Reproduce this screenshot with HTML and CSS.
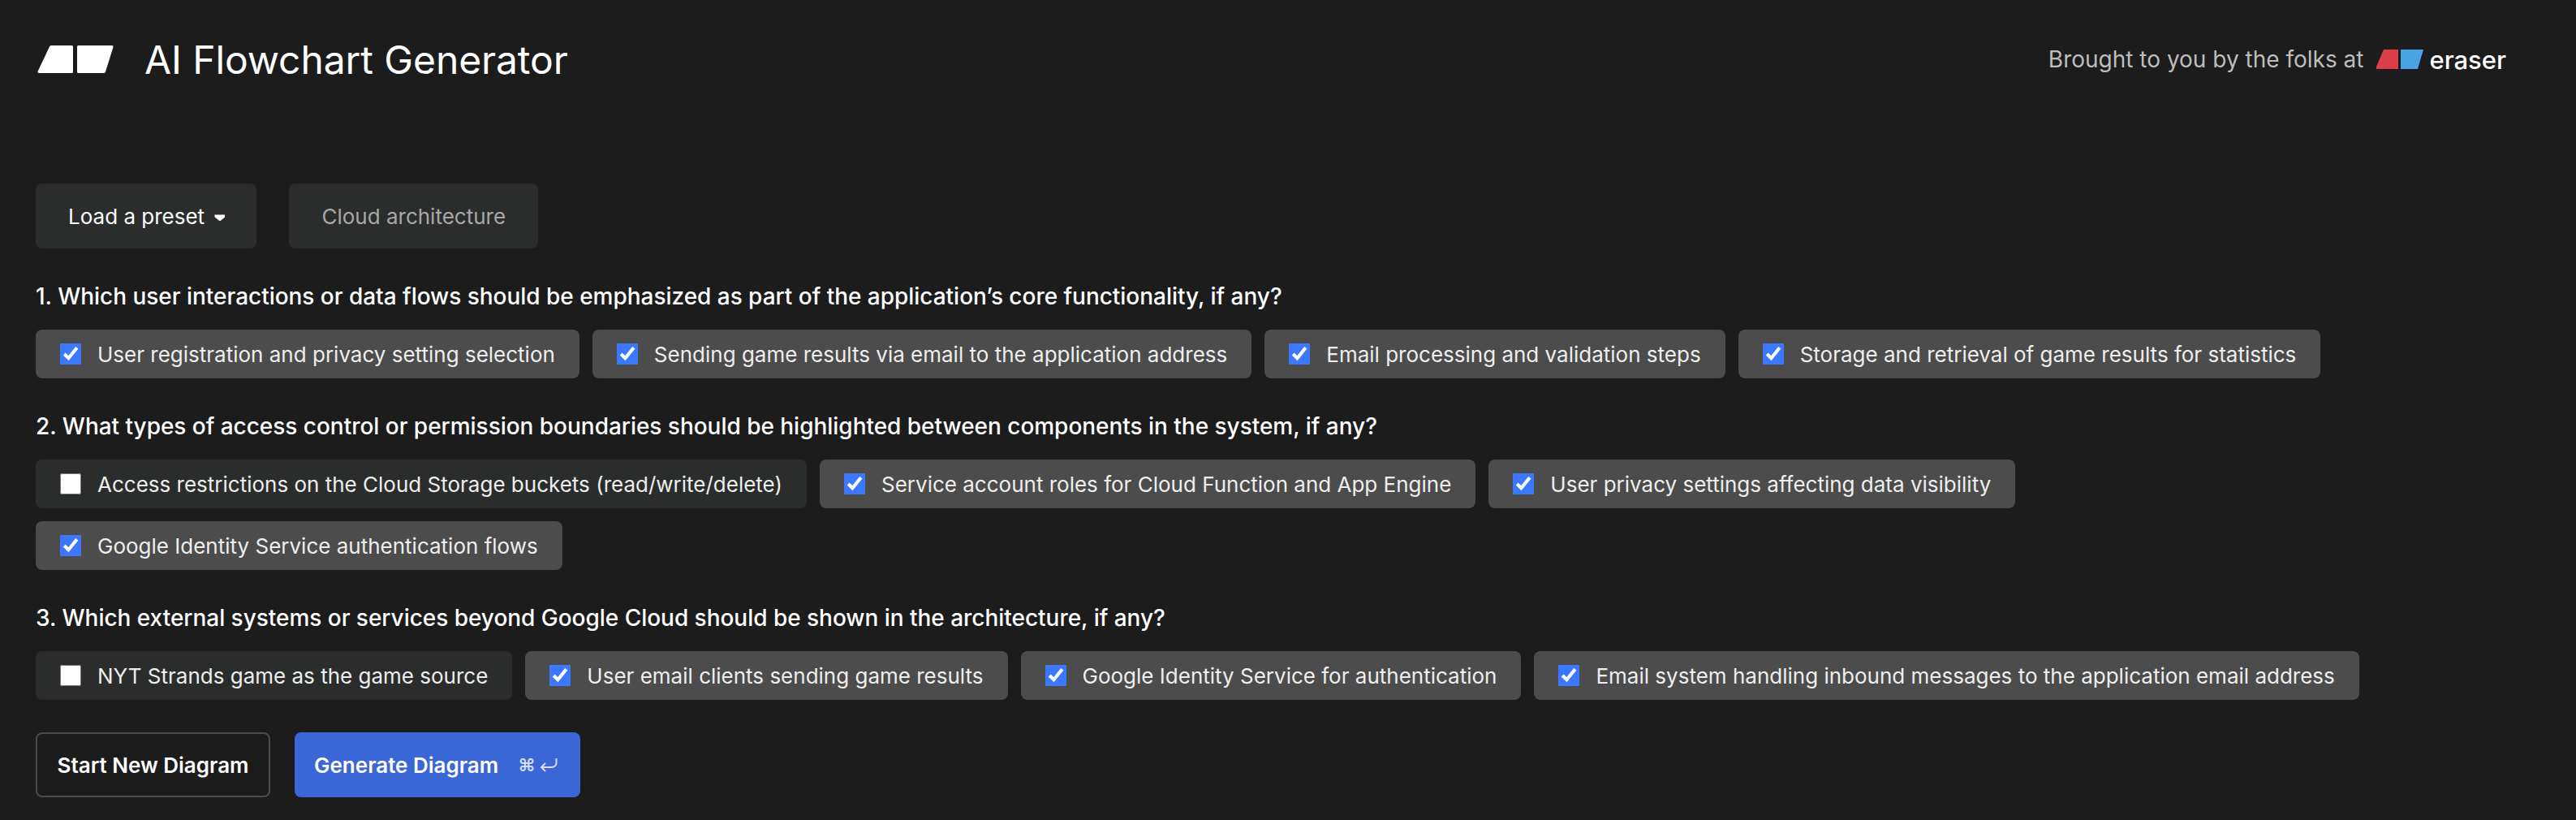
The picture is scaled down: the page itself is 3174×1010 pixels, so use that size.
FILE: index.html
```html
<!DOCTYPE html>
<html lang="en">
<head>
    <meta charset="UTF-8">
    <meta name="viewport" content="width=device-width, initial-scale=1.0">
    <title>AI Flowchart Generator</title>
    <link rel="stylesheet" href="styles.css">
</head>
<body>

<header class="topbar">
    <div class="brand">
        <svg class="brand-logo" viewBox="0 0 94 34" width="94" height="34">
            <path d="M15 1.500Q15.500 0 17 0H42.500Q44 0 44 1.500V32.500Q44 34 42.500 34H2Q0 34 .5 32Z" fill="#fff"/>
            <path d="M49 1.500Q49 0 50.500 0H92Q94 0 93.500 2L84 32.500Q83.500 34 82 34H50.500Q49 34 49 32.500Z" fill="#fff"/>
        </svg>
        <h1 class="brand-title">AI Flowchart Generator</h1>
    </div>
    <div class="credit">
        <span>Brought to you by the folks at</span>
        <svg class="credit-logo" viewBox="0 0 58 24" width="58" height="24">
            <path d="M9 0H27V24H0V21Z" fill="#dc3f4a"/>
            <path d="M30 0H58L51 24H30Z" fill="#4aa3e2"/>
        </svg>
        <span class="credit-name">eraser</span>
    </div>
</header>

<main>
    <div class="presets">
        <button class="preset-btn preset-load">Load a preset <span class="caret"></span></button>
        <button class="preset-btn preset-current">Cloud architecture</button>
    </div>

    <section class="question">
        <h2>1. Which user interactions or data flows should be emphasized as part of the application’s core functionality, if any?</h2>
        <div class="options">
            <label class="option on"><input type="checkbox" checked>User registration and privacy setting selection</label>
            <label class="option on"><input type="checkbox" checked>Sending game results via email to the application address</label>
            <label class="option on"><input type="checkbox" checked>Email processing and validation steps</label>
            <label class="option on"><input type="checkbox" checked>Storage and retrieval of game results for statistics</label>
        </div>
    </section>

    <section class="question">
        <h2>2. What types of access control or permission boundaries should be highlighted between components in the system, if any?</h2>
        <div class="options">
            <label class="option"><input type="checkbox">Access restrictions on the Cloud Storage buckets (read/write/delete)</label>
            <label class="option on"><input type="checkbox" checked>Service account roles for Cloud Function and App Engine</label>
            <label class="option on"><input type="checkbox" checked>User privacy settings affecting data visibility</label>
            <label class="option on"><input type="checkbox" checked>Google Identity Service authentication flows</label>
        </div>
    </section>

    <section class="question">
        <h2>3. Which external systems or services beyond Google Cloud should be shown in the architecture, if any?</h2>
        <div class="options">
            <label class="option"><input type="checkbox">NYT Strands game as the game source</label>
            <label class="option on"><input type="checkbox" checked>User email clients sending game results</label>
            <label class="option on"><input type="checkbox" checked>Google Identity Service for authentication</label>
            <label class="option on"><input type="checkbox" checked>Email system handling inbound messages to the application email address</label>
        </div>
    </section>

    <div class="actions">
        <button class="btn-outline">Start New Diagram</button>
        <button class="btn-primary">Generate Diagram
            <span class="shortcut">⌘
                <svg viewBox="0 0 22 18" width="22" height="18" fill="none" stroke="#d5def5" stroke-width="2">
                    <path d="M7 7 2 12l5 5M2 12h13a5.500 5.500 0 0 0 5.500-5.500V1"/>
                </svg>
            </span>
        </button>
    </div>
</main>

</body>
</html>
```

FILE: styles.css
```css
* {
    box-sizing: border-box;
}
body {
    font-family: Inter, "Liberation Sans", sans-serif;
    margin: 0;
    padding: 0 44px;
    background-color: #1c1c1c;
    color: #fff;
    font-size: 26px;
}
button {
    font-family: inherit;
    font-size: 26px;
    border: none;
    cursor: pointer;
}
.topbar {
    display: flex;
    justify-content: space-between;
    align-items: center;
    height: 146px;
    padding-right: 42px;
}
.brand {
    display: flex;
    align-items: center;
    gap: 38px;
    padding-left: 2px;
}
.brand-title {
    margin: 0;
    font-size: 48px;
    font-weight: 400;
    letter-spacing: -0.1px;
}
.credit {
    display: flex;
    align-items: center;
    color: #bdbdbd;
    font-size: 28px;
}
.credit-logo {
    margin-left: 16px;
    margin-right: 7px;
}
.credit-name {
    color: #fff;
    font-size: 31px;
    font-weight: 500;
}
main {
    padding-top: 80px;
}
.presets {
    display: flex;
    gap: 40px;
}
.preset-btn {
    height: 80px;
    padding: 0 40px;
    background: #2b2d2c;
    color: #fff;
    border-radius: 8px;
}
.preset-load {
    padding-right: 39px;
}
.preset-current {
    color: #a8a8a8;
}
.caret {
    display: inline-block;
    width: 13px;
    height: 8px;
    margin-left: 5px;
    vertical-align: middle;
    background: #fff;
    clip-path: polygon(0 0, 100% 0, 100% 35%, 50% 100%, 0 35%);
}
.question {
    margin-top: 43px;
}
.question h2 {
    margin: 0;
    font-size: 28px;
    font-weight: 500;
    line-height: 32px;
    letter-spacing: -0.03px;
}
.options {
    display: flex;
    flex-wrap: wrap;
    gap: 16px;
    margin-top: 25px;
}
.option {
    display: flex;
    align-items: center;
    gap: 20px;
    height: 60px;
    padding: 0 30px;
    background: #2b2d2c;
    border-radius: 8px;
    color: #eee;
}
.option.on {
    background: #4c4c4c;
}
.option input {
    width: 26px;
    height: 26px;
    margin: 0;
    accent-color: #3b78ff;
}
.actions {
    display: flex;
    gap: 30px;
    margin-top: 40px;
}
.btn-outline,
.btn-primary {
    height: 80px;
    font-weight: 600;
    color: #fff;
    border-radius: 8px;
}
.btn-outline {
    width: 289px;
    background: transparent;
    border: 2px solid #4c4c4c;
}
.btn-primary {
    display: flex;
    align-items: center;
    width: 352px;
    padding: 0 24px;
    background: #3b66d6;
}
.shortcut {
    display: flex;
    align-items: center;
    gap: 5px;
    margin-left: 24px;
    font-size: 22px;
    color: #d5def5;
}
```
